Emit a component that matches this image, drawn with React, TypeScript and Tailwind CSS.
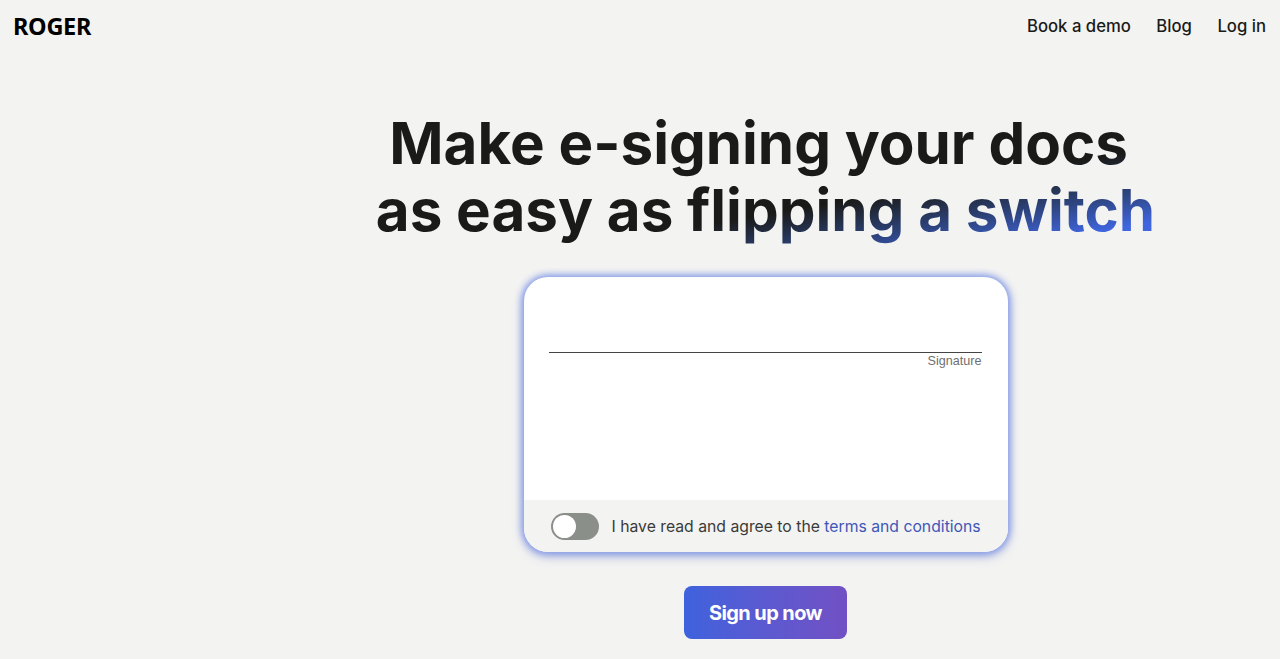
import React from 'react';

export default function App() {
  return (
    <div className="h-[659px] w-full overflow-hidden bg-[#f3f3f2] font-['Inter',sans-serif] text-[#1a1a18]">
      <header className="flex h-[54px] items-center justify-between pl-[13px] pr-[14px]">
        <div className="font-['Noto_Sans',sans-serif] text-[23.5px] font-bold leading-none tracking-[-0.3px] text-black">ROGER</div>
        <nav className="flex items-center gap-[25.5px] text-[16.7px] font-medium">
          <a>Book a demo</a>
          <a>Blog</a>
          <a>Log in</a>
        </nav>
      </header>

      <main className="flex flex-col items-center pl-[251px]">
        <h1 className="mt-[56px] bg-gradient-to-br from-[#1a1a18] from-[64%] to-[#3f66e0] to-[92%] bg-clip-text text-center text-[58.3px] font-bold leading-[67px] text-transparent">
          Make e-signing your docs&nbsp;
          <br />
          as easy as flipping a switch
        </h1>

        <div className="mt-[33px] flex h-[275px] w-[484px] flex-col overflow-hidden rounded-[24px] bg-white shadow-[0_0_7px_2px_#8098e8,0_4px_12px_rgba(60,80,180,0.35)]">
          <div className="flex-1 pl-[25px] pr-[26px] pt-[75px] font-['Liberation_Sans',sans-serif]">
            <div className="border-t border-[#444444]" />
            <div className="mt-[1px] text-right text-[12.6px] leading-[15px] text-[#6f6f6f]">Signature</div>
          </div>
          <div className="flex h-[52px] items-center bg-[#f3f3f2] pl-[27px]">
            <div className="flex h-[27px] w-[48px] items-center rounded-full bg-[#8b8f8a] p-[2px]">
              <div className="size-[23px] rounded-full bg-white" />
            </div>
            <p className="ml-[13px] whitespace-nowrap pt-[1px] text-[15.75px] text-[#3a3a38]">
              I have read and agree to the <a className="text-[#3f57b8]">terms and conditions</a>
            </p>
          </div>
        </div>

        <button className="mt-[34px] flex h-[53px] w-[163px] items-center justify-center rounded-[8px] bg-gradient-to-r from-[#3d62dd] to-[#7150c4] text-[20px] font-bold tracking-[-0.6px] text-white">
          Sign up now
        </button>
      </main>
    </div>
  );
}
